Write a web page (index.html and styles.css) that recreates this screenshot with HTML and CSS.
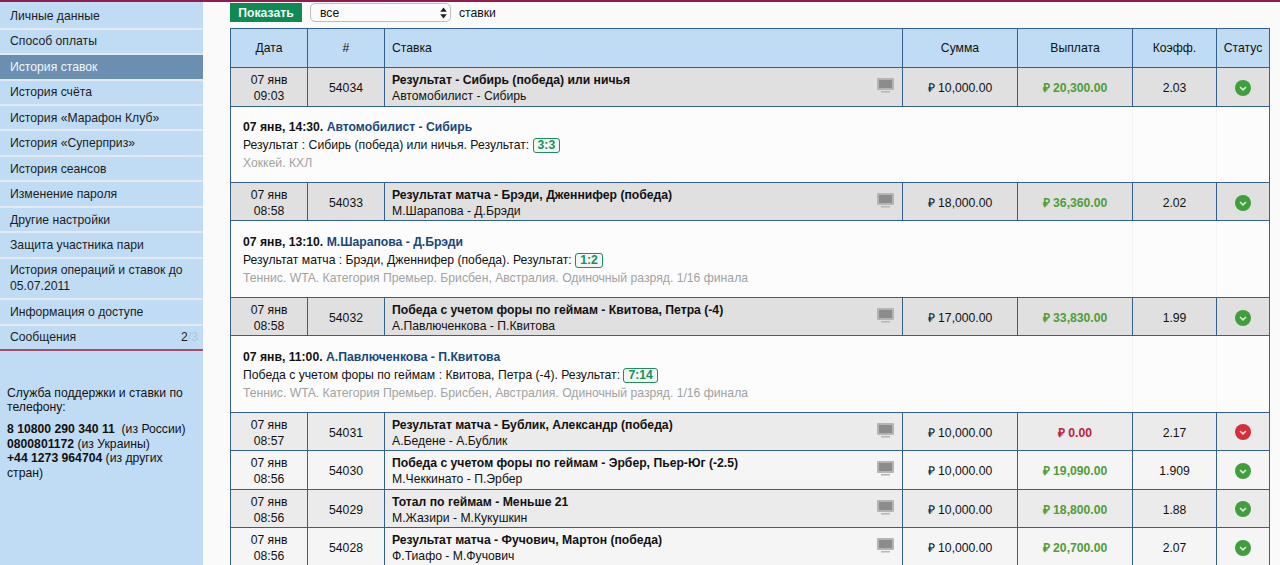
FILE: index.html
```html
<!DOCTYPE html>
<html>
<head>
<meta charset="utf-8">
<title>История ставок</title>
<link rel="stylesheet" href="styles.css">
</head>
<body>
<div class="page">
	<div class="sidebar">
		<ul class="menu">
			<li>Личные данные</li>
			<li>Способ оплаты</li>
			<li class="active">История ставок</li>
			<li>История счёта</li>
			<li>История «Марафон Клуб»</li>
			<li>История «Суперприз»</li>
			<li>История сеансов</li>
			<li>Изменение пароля</li>
			<li>Другие настройки</li>
			<li>Защита участника пари</li>
			<li>История операций и ставок до 05.07.2011</li>
			<li>Информация о доступе</li>
			<li class="messages">Сообщения <span><b>2</b><i>/3</i></span></li>
		</ul>
		<div class="support">
			<p>Служба поддержки и ставки по телефону:</p>
			<p><b>8 10800 290 340 11</b>&nbsp; (из России)<br><b>0800801172</b> (из Украины)<br><b>+44 1273 964704</b> (из других стран)</p>
		</div>
	</div>
	<div class="content">
		<div class="filter">
			<button class="show">Показать</button>
			<div class="select_box">
				<select><option>все</option></select>
				<svg class="select_arrows" width="7" height="12" viewBox="0 0 7 12"><path d="M3.5 0.5 L6.8 4.8 H0.2 Z M3.5 11.5 L6.8 7.2 H0.2 Z" fill="#222"/></svg>
			</div>
			<span>ставки</span>
		</div>
		<table class="bets">
			<colgroup>
				<col class="c_date"><col class="c_num"><col><col class="c_sum"><col class="c_sum"><col class="c_coef"><col class="c_status">
			</colgroup>
			<tr class="head">
				<th>Дата</th><th>#</th><th class="left">Ставка</th><th>Сумма</th><th>Выплата</th><th>Коэфф.</th><th>Статус</th>
			</tr>
			<tr class="bet open">
				<td>07 янв<br>09:03</td><td>54034</td>
				<td class="stake"><div class="stake_in"><div><b>Результат - Сибирь (победа) или ничья</b><br>Автомобилист - Сибирь</div><svg class="tv" width="17" height="15" viewBox="0 0 17 15"><use href="#tv"/></svg></div></td>
				<td>₽ 10,000.00</td><td class="win">₽ 20,300.00</td><td>2.03</td>
				<td><svg class="st" width="16" height="16" viewBox="0 0 16 16"><use href="#ok"/></svg></td>
			</tr>
			<tr class="detail">
				<td colspan="5">
					<div class="d_title"><b>07 янв, 14:30.</b> <b class="event">Автомобилист - Сибирь</b></div>
					<div class="d_line">Результат : Сибирь (победа) или ничья. Результат: <span class="score">3:3</span></div>
					<div class="d_league">Хоккей. КХЛ</div>
				</td>
				<td></td><td></td>
			</tr>
			<tr class="bet open">
				<td>07 янв<br>08:58</td><td>54033</td>
				<td class="stake"><div class="stake_in"><div><b>Результат матча - Брэди, Дженнифер (победа)</b><br>М.Шарапова - Д.Брэди</div><svg class="tv" width="17" height="15" viewBox="0 0 17 15"><use href="#tv"/></svg></div></td>
				<td>₽ 18,000.00</td><td class="win">₽ 36,360.00</td><td>2.02</td>
				<td><svg class="st" width="16" height="16" viewBox="0 0 16 16"><use href="#ok"/></svg></td>
			</tr>
			<tr class="detail">
				<td colspan="5">
					<div class="d_title"><b>07 янв, 13:10.</b> <b class="event">М.Шарапова - Д.Брэди</b></div>
					<div class="d_line">Результат матча : Брэди, Дженнифер (победа). Результат: <span class="score">1:2</span></div>
					<div class="d_league">Теннис. WTA. Категория Премьер. Брисбен, Австралия. Одиночный разряд. 1/16 финала</div>
				</td>
				<td></td><td></td>
			</tr>
			<tr class="bet open">
				<td>07 янв<br>08:58</td><td>54032</td>
				<td class="stake"><div class="stake_in"><div><b>Победа с учетом форы по геймам - Квитова, Петра (-4)</b><br>А.Павлюченкова - П.Квитова</div><svg class="tv" width="17" height="15" viewBox="0 0 17 15"><use href="#tv"/></svg></div></td>
				<td>₽ 17,000.00</td><td class="win">₽ 33,830.00</td><td>1.99</td>
				<td><svg class="st" width="16" height="16" viewBox="0 0 16 16"><use href="#ok"/></svg></td>
			</tr>
			<tr class="detail">
				<td colspan="5">
					<div class="d_title"><b>07 янв, 11:00.</b> <b class="event">А.Павлюченкова - П.Квитова</b></div>
					<div class="d_line">Победа с учетом форы по геймам : Квитова, Петра (-4). Результат: <span class="score">7:14</span></div>
					<div class="d_league">Теннис. WTA. Категория Премьер. Брисбен, Австралия. Одиночный разряд. 1/16 финала</div>
				</td>
				<td></td><td></td>
			</tr>
			<tr class="bet even">
				<td>07 янв<br>08:57</td><td>54031</td>
				<td class="stake"><div class="stake_in"><div><b>Результат матча - Бублик, Александр (победа)</b><br>А.Бедене - А.Бублик</div><svg class="tv" width="17" height="15" viewBox="0 0 17 15"><use href="#tv"/></svg></div></td>
				<td>₽ 10,000.00</td><td class="lose">₽ 0.00</td><td>2.17</td>
				<td><svg class="st" width="16" height="16" viewBox="0 0 16 16"><use href="#bad"/></svg></td>
			</tr>
			<tr class="bet odd">
				<td>07 янв<br>08:56</td><td>54030</td>
				<td class="stake"><div class="stake_in"><div><b>Победа с учетом форы по геймам - Эрбер, Пьер-Юг (-2.5)</b><br>М.Чеккинато - П.Эрбер</div><svg class="tv" width="17" height="15" viewBox="0 0 17 15"><use href="#tv"/></svg></div></td>
				<td>₽ 10,000.00</td><td class="win">₽ 19,090.00</td><td>1.909</td>
				<td><svg class="st" width="16" height="16" viewBox="0 0 16 16"><use href="#ok"/></svg></td>
			</tr>
			<tr class="bet even">
				<td>07 янв<br>08:56</td><td>54029</td>
				<td class="stake"><div class="stake_in"><div><b>Тотал по геймам - Меньше 21</b><br>М.Жазири - М.Кукушкин</div><svg class="tv" width="17" height="15" viewBox="0 0 17 15"><use href="#tv"/></svg></div></td>
				<td>₽ 10,000.00</td><td class="win">₽ 18,800.00</td><td>1.88</td>
				<td><svg class="st" width="16" height="16" viewBox="0 0 16 16"><use href="#ok"/></svg></td>
			</tr>
			<tr class="bet odd">
				<td>07 янв<br>08:56</td><td>54028</td>
				<td class="stake"><div class="stake_in"><div><b>Результат матча - Фучович, Мартон (победа)</b><br>Ф.Тиафо - М.Фучович</div><svg class="tv" width="17" height="15" viewBox="0 0 17 15"><use href="#tv"/></svg></div></td>
				<td>₽ 10,000.00</td><td class="win">₽ 20,700.00</td><td>2.07</td>
				<td><svg class="st" width="16" height="16" viewBox="0 0 16 16"><use href="#ok"/></svg></td>
			</tr>
		</table>
	</div>
</div>
<svg class="defs" width="0" height="0">
	<defs>
		<g id="tv">
			<rect x="0" y="0" width="17" height="12" rx="1" fill="#b4b4b4"/>
			<rect x="2" y="2" width="13" height="8" fill="#8c8c8c"/>
			<rect x="4" y="13" width="9" height="1.5" fill="#b4b4b4"/>
		</g>
		<g id="ok">
			<circle cx="8" cy="8" r="8" fill="#409e3c"/>
			<path d="M5 7 L8 9.8 L11 7" fill="none" stroke="#d8ecd6" stroke-width="1.6"/>
		</g>
		<g id="bad">
			<circle cx="8" cy="8" r="8" fill="#d32f3c"/>
			<path d="M5 7 L8 9.8 L11 7" fill="none" stroke="#f4d8da" stroke-width="1.6"/>
		</g>
	</defs>
</svg>
</body>
</html>
```

FILE: styles.css
```css
html, body {
	margin: 0;
	height: 565px;
	overflow: hidden;
}
body {
	font-family: "Liberation Sans", Arial, sans-serif;
	font-size: 12.2px;
	color: #111;
	background-color: #fafafa;
	border-top: 2px solid #8f1c4d;
	box-sizing: border-box;
}
.page {
	display: flex;
	height: 563px;
}
.defs {
	display: none;
}

.sidebar {
	width: 203px;
	flex: none;
	background-color: #c0dcf4;
}
.menu {
	list-style: none;
	margin: 0;
	padding: 0;
	border-bottom: 2px solid #a84a68;
}
.menu li {
	padding: 3.72px 10px;
	line-height: 16px;
	border-bottom: 2px solid #e3e9ee;
	background-color: #c0dcf4;
	color: #1c1c1c;
}
.menu li:first-child {
	padding-top: 6px;
}
.menu li:last-child {
	border-bottom: none;
}
.menu .active {
	background-color: #6b8fb0;
	color: #f2f6fa;
}
.messages {
	display: flex;
	justify-content: space-between;
	padding-right: 5px !important;
}
.messages b {
	font-weight: normal;
}
.messages i {
	font-style: normal;
	color: #a9c6de;
}
.support {
	padding: 35px 7px 0 7px;
	line-height: 14.5px;
}
.support p {
	margin: 0 0 7.5px 0;
}

.content {
	flex: 1;
	padding: 1px 10px 0 27px;
	min-width: 0;
}
.filter {
	display: flex;
	align-items: center;
	height: 19px;
	margin-bottom: 6px;
}
.show {
	width: 72px;
	height: 19px;
	padding: 0;
	border: none;
	background-color: #0f8a55;
	color: #eef7f2;
	font-family: "Liberation Sans", Arial, sans-serif;
	font-size: 12.2px;
	font-weight: bold;
}
.select_box {
	position: relative;
	width: 141px;
	height: 19px;
	margin: 0 8px 0 8px;
}
.select_box select {
	width: 100%;
	height: 19px;
	padding: 0 0 0 9px;
	appearance: none;
	border: 1px solid #bdbdbd;
	border-radius: 5px;
	background-color: #fbfbfb;
	font-family: "Liberation Sans", Arial, sans-serif;
	font-size: 12.2px;
	color: #111;
}
.select_arrows {
	position: absolute;
	right: 4px;
	top: 4px;
	pointer-events: none;
}

.bets {
	width: 1040px;
	table-layout: fixed;
	border-collapse: collapse;
	border: 1px solid #33618f;
}
.c_date, .c_num {
	width: 77px;
}
.c_sum {
	width: 115px;
}
.c_coef {
	width: 84px;
}
.c_status {
	width: 53px;
}
.bets th, .bets td {
	border: 1px solid #33618f;
	padding: 0 6px;
	text-align: center;
	font-weight: normal;
	line-height: 16px;
}
.head th {
	height: 38px;
	background-color: #c0dcf4;
}
.bets .left {
	text-align: left;
	padding-left: 7px;
}
.bet td {
	height: 34.5px;
	padding-top: 3px;
}
.open td {
	background-color: #e0e0e0;
}
.even td {
	background-color: #ebebeb;
}
.odd td {
	background-color: #f5f5f5;
}
.bets .stake {
	text-align: left;
	padding-left: 7px;
}
.stake_in {
	display: flex;
	justify-content: space-between;
	align-items: flex-start;
}
.tv {
	margin: 6px 2px 0 0;
}
.st {
	display: block;
	margin: -1px auto 0 auto;
}
.bets .win {
	color: #4d9e3a;
	font-weight: bold;
}
.bets .lose {
	color: #c1213a;
	font-weight: bold;
}

.bets .detail td {
	height: 73.4px;
	padding-top: 2px;
	border-color: #f4f4f4;
	border-top-color: #33618f;
	border-bottom-color: #33618f;
	background-color: #fcfcfc;
	text-align: left;
	padding-left: 12px;
}
.bets .detail td:last-child {
	border-right-color: #33618f;
}
.bets .detail td:first-child {
	border-left-color: #33618f;
}
.d_title, .d_line, .d_league {
	line-height: 18px;
}
.event {
	color: #17477c;
}
.d_league {
	color: #a2a2a2;
}
.score {
	display: inline-block;
	padding: 0 4px;
	line-height: 13px;
	border: 1px solid #1f8d5c;
	border-radius: 3px;
	background-color: #f0f7f2;
	color: #1f8d5c;
	font-weight: bold;
}
```
